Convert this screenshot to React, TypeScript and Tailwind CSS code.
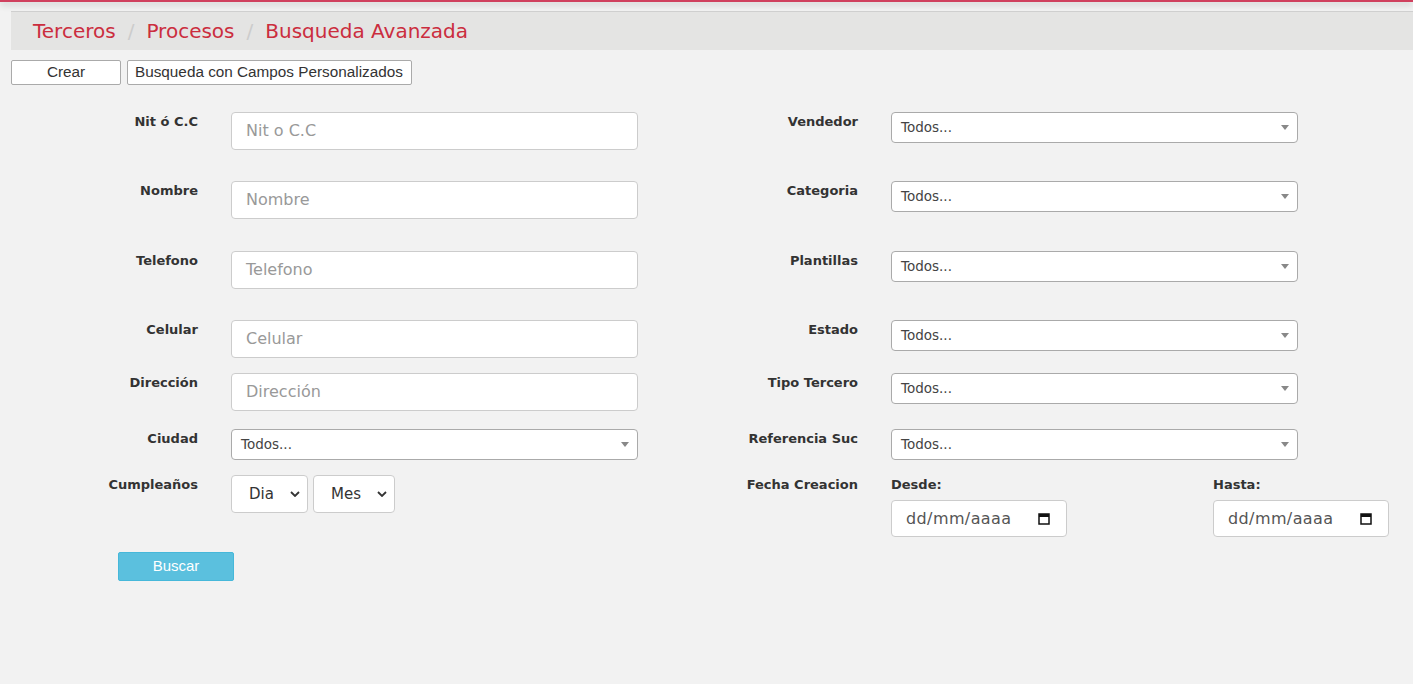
import React from 'react';

const labelCls =
  "font-['DejaVu_Sans',sans-serif] text-[13px] font-bold text-[#333] leading-[18px]";

function TextField({ placeholder }: { placeholder: string }) {
  return (
    <div className="w-[407px] h-[38px] bg-white border border-[#ccc] rounded-[4px] flex items-center px-[14px]">
      <span className="font-['DejaVu_Sans',sans-serif] text-[16px] text-[#999]">{placeholder}</span>
    </div>
  );
}

function Select2({ value = 'Todos...' }: { value?: string }) {
  return (
    <div className="w-[407px] h-[31px] bg-white border border-[#aaa] rounded-[4px] flex items-center justify-between pl-[9px] pr-[8px]">
      <span className="font-['DejaVu_Sans',sans-serif] text-[13.5px] text-[#444]">{value}</span>
      <svg width="8" height="5" viewBox="0 0 8 5">
        <path d="M0 0h8L4 5z" fill="#888" />
      </svg>
    </div>
  );
}

function NativeSelect({ text, width }: { text: string; width: string }) {
  return (
    <div
      className={`${width} h-[38px] bg-white border border-[#ccc] rounded-[4px] flex items-center justify-between pl-[17px] pr-[7px]`}
    >
      <span className="font-['DejaVu_Sans',sans-serif] text-[15px] text-[#333]">{text}</span>
      <svg width="10" height="6" viewBox="0 0 10 6">
        <path d="M1 1l4 4 4-4" stroke="#333" strokeWidth="1.8" fill="none" />
      </svg>
    </div>
  );
}

function DateField() {
  return (
    <div className="w-[176px] h-[37px] bg-white border border-[#ccc] rounded-[4px] flex items-center justify-between pl-[14px] pr-[16px]">
      <span className="font-['DejaVu_Sans',sans-serif] text-[16px] tracking-[0.4px] text-[#555]">dd/mm/aaaa</span>
      <svg width="12" height="13" viewBox="0 0 12 13">
        <rect x="1" y="2" width="10" height="10" stroke="#111" strokeWidth="1.5" fill="none" />
        <rect x="1" y="2" width="10" height="3" fill="#111" />
      </svg>
    </div>
  );
}

type Row = {
  left: string;
  leftField: React.ReactNode;
  right: string;
  height: string;
};

const rows: Row[] = [
  { left: 'Nit ó C.C', leftField: <TextField placeholder="Nit o C.C" />, right: 'Vendedor', height: 'h-[69px]' },
  { left: 'Nombre', leftField: <TextField placeholder="Nombre" />, right: 'Categoria', height: 'h-[70px]' },
  { left: 'Telefono', leftField: <TextField placeholder="Telefono" />, right: 'Plantillas', height: 'h-[69px]' },
  { left: 'Celular', leftField: <TextField placeholder="Celular" />, right: 'Estado', height: 'h-[53px]' },
  { left: 'Dirección', leftField: <TextField placeholder="Dirección" />, right: 'Tipo Tercero', height: 'h-[56px]' },
  { left: 'Ciudad', leftField: <Select2 />, right: 'Referencia Suc', height: 'h-[46px]' },
];

export default function App() {
  return (
    <div className="min-h-[684px] bg-[#f2f2f2] font-['Liberation_Sans',sans-serif]">
      <div className="h-[2px] bg-[#d0405e] shadow-[0_2px_7px_rgba(0,0,0,0.3)]" />
      <div className="h-[9px]" />
      <div className="ml-[11px] border-t border-[#cfcfcf] bg-[#e4e4e3] h-[39px] flex items-center pl-[22px] font-['DejaVu_Sans',sans-serif] text-[20px] text-[#cb2d3e]">
        <span>Terceros</span>
        <span className="text-[#ccc] px-[12px]">/</span>
        <span>Procesos</span>
        <span className="text-[#ccc] px-[12px]">/</span>
        <span>Busqueda Avanzada</span>
      </div>

      <div className="ml-[11px] mt-[10px] flex gap-[6px] text-[15.3px] text-[#333]">
        <button className="w-[110px] h-[25px] bg-white border border-[#aaa] rounded-[2px]">Crear</button>
        <button className="w-[285px] h-[25px] bg-white border border-[#aaa] rounded-[2px] text-left pl-[7px] whitespace-nowrap">
          Busqueda con Campos Personalizados
        </button>
      </div>

      <div className="mt-[27px] ml-[11px]">
        {rows.map((r) => (
          <div key={r.left} className={`flex ${r.height}`}>
            <div className={`w-[187px] text-right ${labelCls} pt-[1px]`}>{r.left}</div>
            <div className="ml-[33px] w-[407px]">{r.leftField}</div>
            <div className={`w-[220px] text-right ${labelCls} pt-[1px]`}>{r.right}</div>
            <div className="ml-[33px]">
              <Select2 />
            </div>
          </div>
        ))}

        <div className="flex h-[77px]">
          <div className={`w-[187px] text-right ${labelCls} pt-[1px]`}>Cumpleaños</div>
          <div className="ml-[33px] w-[407px] flex gap-[5px] items-start">
            <NativeSelect text="Dia" width="w-[77px]" />
            <NativeSelect text="Mes" width="w-[82px]" />
          </div>
          <div className={`w-[220px] text-right ${labelCls} pt-[1px]`}>Fecha Creacion</div>
          <div className="ml-[33px] flex">
            <div className="w-[322px]">
              <div className={`${labelCls} text-left pt-[1px] h-[25px]`}>Desde:</div>
              <DateField />
            </div>
            <div>
              <div className={`${labelCls} text-left pt-[1px] h-[25px]`}>Hasta:</div>
              <DateField />
            </div>
          </div>
        </div>

        <button className="ml-[107px] w-[116px] h-[29px] bg-[#5bc0de] border border-[#46b8da] rounded-[2px] text-white text-[15px]">
          Buscar
        </button>
      </div>
    </div>
  );
}
